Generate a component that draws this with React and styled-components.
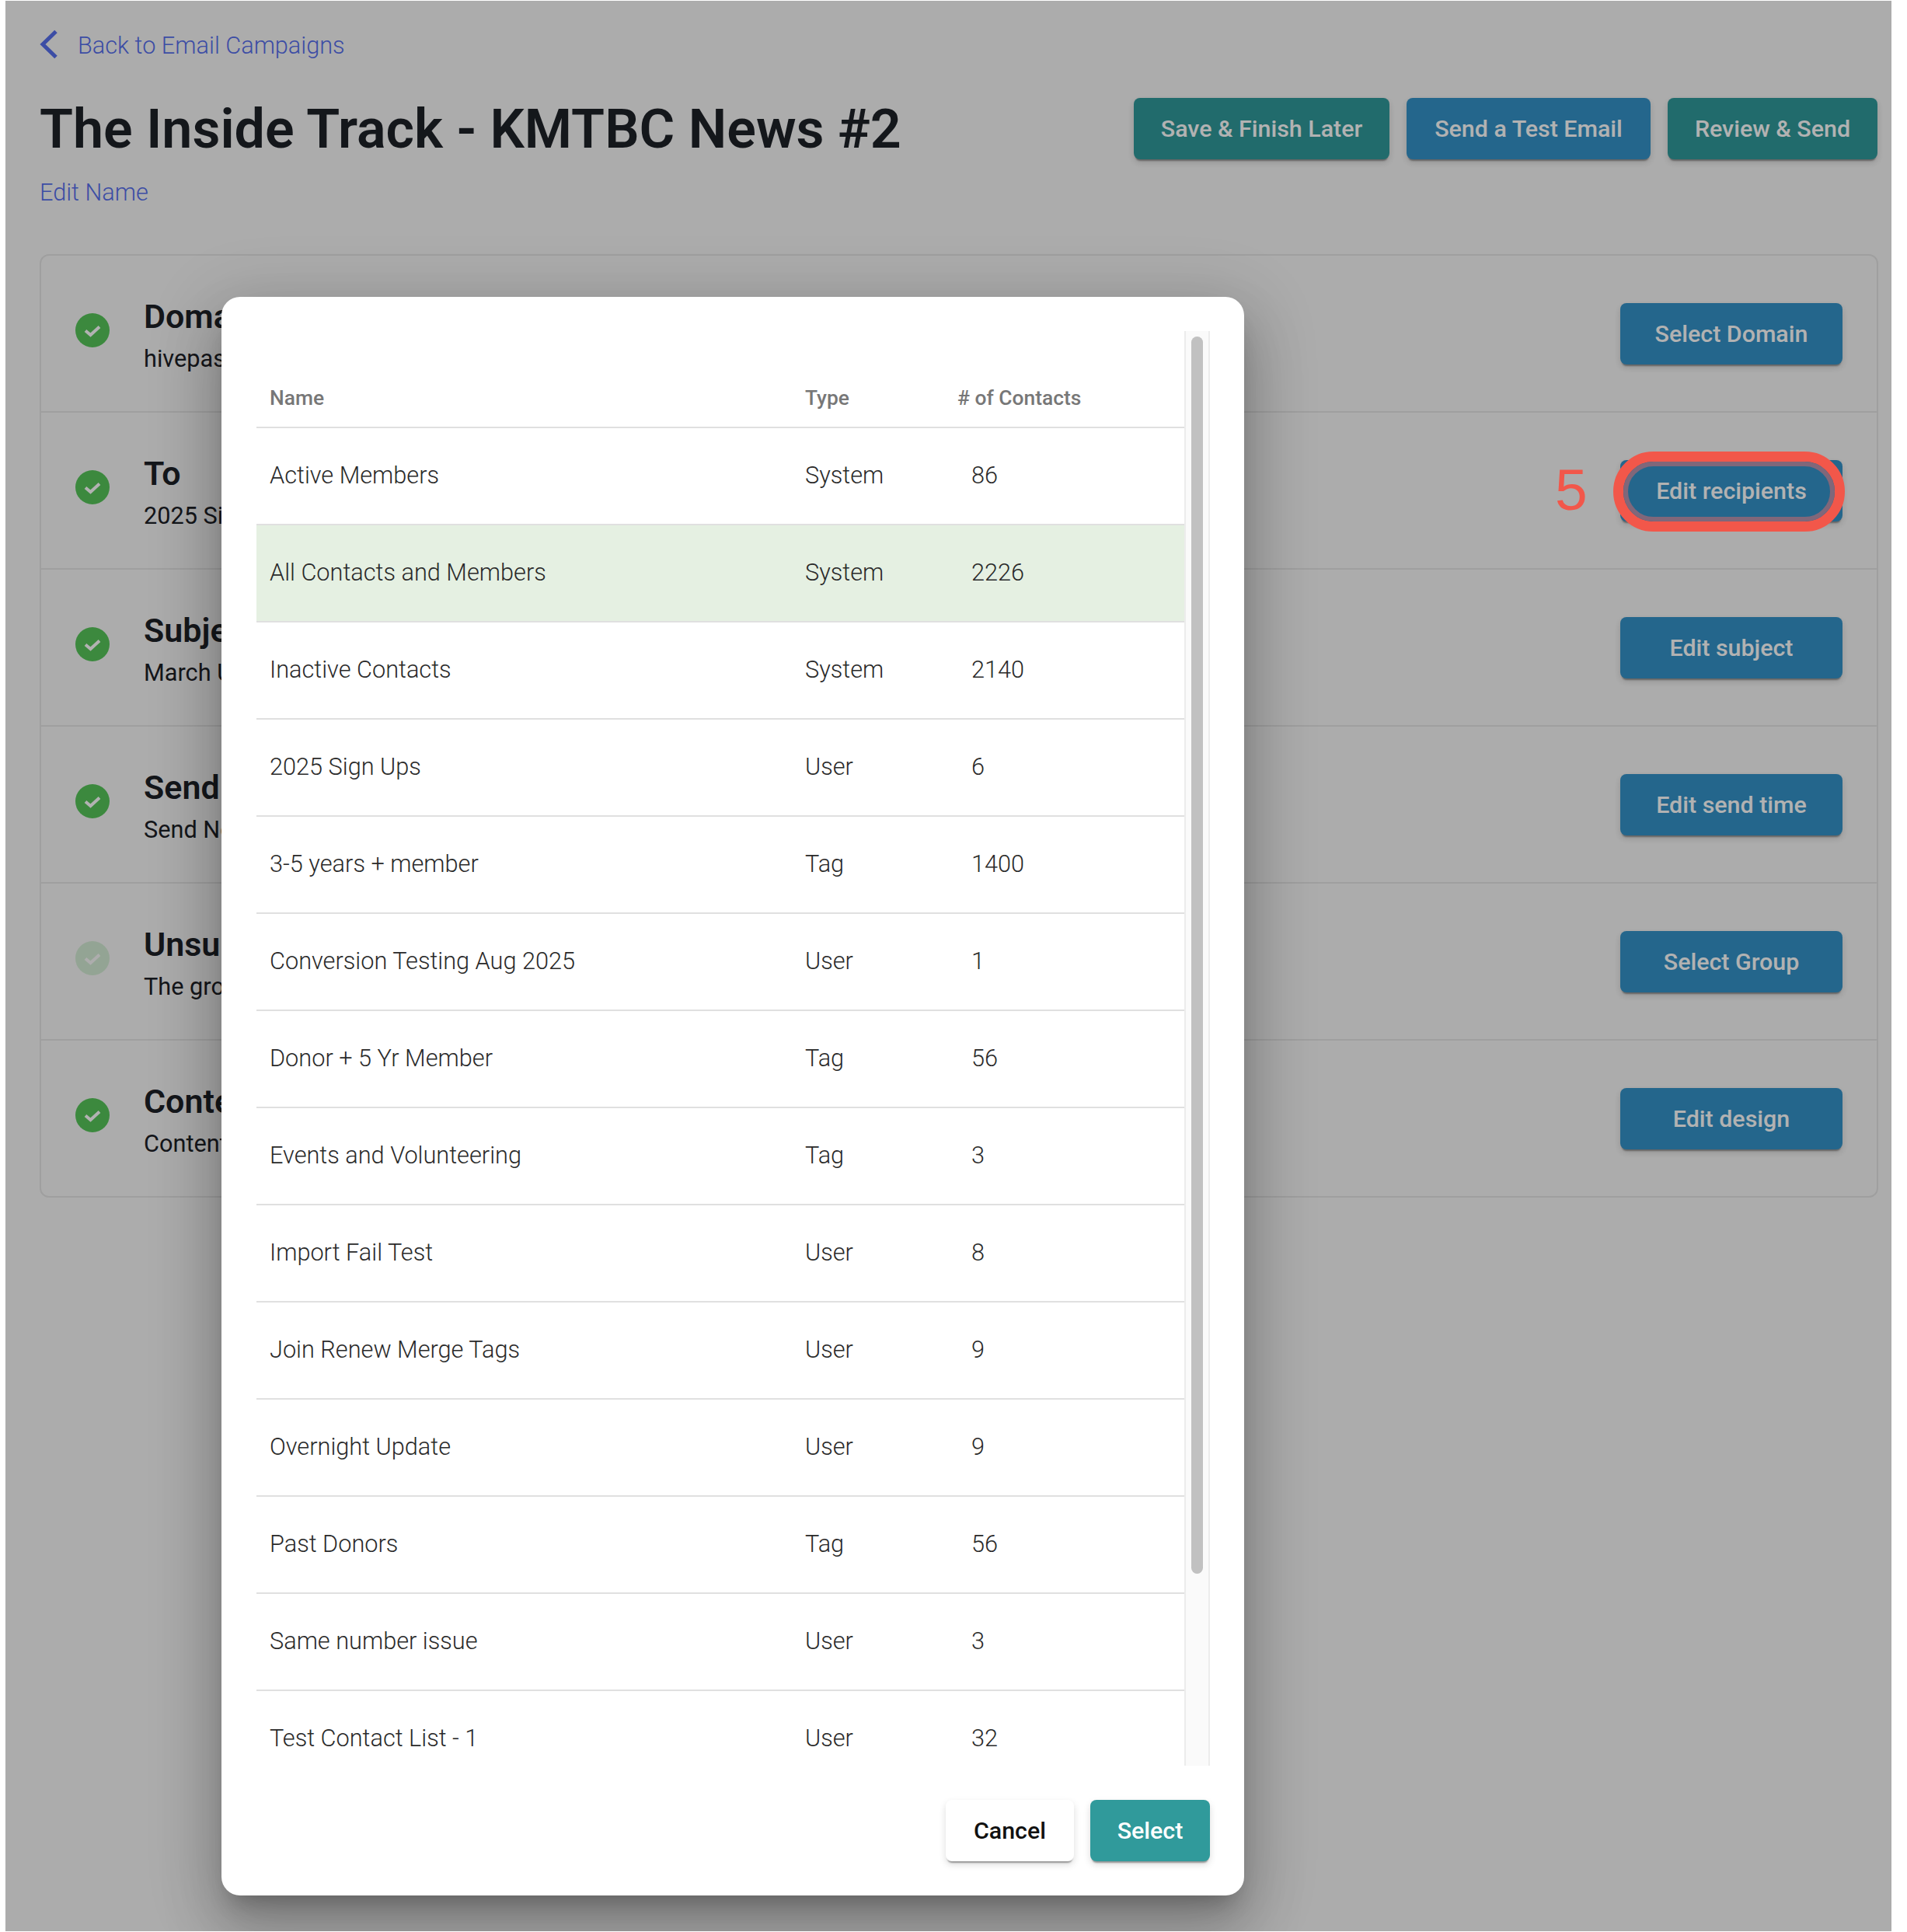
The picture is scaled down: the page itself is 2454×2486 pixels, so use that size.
import React from "react";
import styled, { createGlobalStyle } from "styled-components";

const GlobalStyle = createGlobalStyle`
  html, body {
    margin: 0;
    padding: 0;
    background: #fff;
  }
  * {
    box-sizing: border-box;
  }
`;

const Screen = styled.div`
  position: relative;
  width: 2427px;
  height: 2484px;
  margin: 1px 0 0 7px;
  padding: 37px 18px 0 44px;
  background: #f7f7f7;
  overflow: hidden;
  font-family: Roboto, sans-serif;
`;

const BackLink = styled.a`
  display: flex;
  align-items: center;
  gap: 25px;
  height: 37px;
  font-size: 30.7px;
  font-weight: 300;
  color: #576fec;
`;

const BackLabel = styled.span`
  margin-top: 3px;
`;

const HeaderRow = styled.div`
  display: flex;
  justify-content: space-between;
  align-items: center;
  margin-top: 51px;
`;

const Title = styled.h1`
  margin: 0;
  font-size: 70px;
  font-weight: 600;
  line-height: 78px;
  color: #1e2128;
`;

const Actions = styled.div`
  display: flex;
  gap: 22px;
`;

const Button = styled.button`
  display: flex;
  align-items: center;
  justify-content: center;
  height: 79px;
  width: ${(p) => (p.$width ? `${p.$width}px` : "auto")};
  padding: 0;
  border: 0;
  border-radius: 8px;
  background: ${(p) => (p.$kind === "teal" ? "#309a9b" : p.$kind === "blue" ? "#3493c9" : "#fff")};
  color: ${(p) => (p.$kind === "plain" ? "#111" : "#fff")};
  font-family: Roboto, sans-serif;
  font-size: 30.4px;
  font-weight: 500;
  box-shadow: 0 4px 2px -2px rgba(0, 0, 0, 0.35), 0 4px 10px rgba(0, 0, 0, 0.14);
`;

const EditName = styled.a`
  display: block;
  margin-top: 23px;
  font-size: 30.7px;
  font-weight: 300;
  line-height: 40px;
  color: #576fec;
`;

const Steps = styled.div`
  width: 2366px;
  margin-top: 59px;
  border: 2px solid #e4e4e4;
  border-radius: 12px;
`;

const Step = styled.div`
  display: flex;
  align-items: center;
  height: ${(p) => (p.$last ? 200 : 202)}px;
  padding: 0 44px;
  border-bottom: ${(p) => (p.$last ? "0" : "2px solid #e4e4e4")};
`;

const StepBadge = styled.svg`
  flex: none;
  width: 44px;
  height: 44px;
  margin: 0 44px 8px 0;
  opacity: ${(p) => (p.$faded ? 0.22 : 1)};
`;

const StepText = styled.div`
  margin-right: auto;
  padding-top: 7px;
  white-space: nowrap;
`;

const StepTitle = styled.div`
  font-size: 43px;
  font-weight: 600;
  line-height: 52px;
  color: #1e2128;
`;

const StepSub = styled.div`
  margin-top: 7px;
  font-size: 30.7px;
  line-height: 44px;
  color: #1e2128;
`;

const Overlay = styled.div`
  position: absolute;
  inset: 0;
  background: rgba(0, 0, 0, 0.3);
`;

const Modal = styled.div`
  position: absolute;
  left: 278px;
  top: 381px;
  display: flex;
  flex-direction: column;
  gap: 44px;
  width: 1316px;
  height: 2057px;
  padding: 44px 44px 44px 45px;
  background: #fff;
  border-radius: 24px;
  box-shadow: 0 21px 29px -13px rgba(0, 0, 0, 0.24), 0 46px 73px 6px rgba(0, 0, 0, 0.17),
    0 17px 88px 15px rgba(0, 0, 0, 0.14);
`;

const ListArea = styled.div`
  display: flex;
  height: 1846px;
`;

const List = styled.div`
  width: 1195px;
  overflow: hidden;
`;

const Row = styled.div`
  display: grid;
  grid-template-columns: 689px 196px 1fr;
  align-items: center;
  height: 125px;
  padding: 0 0 3px 17px;
  border-bottom: 2px solid #e0e0e0;
  background: ${(p) => (p.$selected ? "#e5f0e2" : "transparent")};
  font-size: 30.7px;
  font-weight: 300;
  color: #2a2a2a;
`;

const HeadRow = styled(Row)`
  align-items: end;
  padding-bottom: 22px;
  font-size: 26.4px;
  font-weight: 500;
  color: #777;
`;

const Count = styled.span`
  padding-left: 18px;
`;

const Track = styled.div`
  flex: none;
  width: 33px;
  padding: 7px 7px 0;
  background: #fafafa;
  border-left: 2px solid #ececec;
  border-right: 2px solid #ececec;
`;

const Thumb = styled.div`
  height: 1592px;
  border-radius: 9px;
  background: #c1c1c1;
`;

const ModalFooter = styled.div`
  display: flex;
  justify-content: flex-end;
  gap: 21px;
`;

const Marker = styled.div`
  position: absolute;
  left: 2069px;
  top: 580px;
  width: 298px;
  height: 103px;
  border: 13px solid #f2574a;
  border-radius: 52px;
`;

const MarkerInner = styled.div`
  height: 100%;
  border: 6px solid #80677a;
  border-radius: 40px;
`;

const MarkerNumber = styled.div`
  position: absolute;
  left: 1994px;
  top: 586px;
  font-family: "Liberation Sans", sans-serif;
  font-size: 75px;
  line-height: 86px;
  color: #f2574a;
`;

const steps = [
  { title: "Domain", sub: "hivepass", action: "Select Domain" },
  { title: "To", sub: "2025 Sign Ups", action: "Edit recipients" },
  { title: "Subject", sub: "March Update", action: "Edit subject" },
  { title: "Send", sub: "Send Now", action: "Edit send time" },
  { title: "Unsubscribe", sub: "The group", action: "Select Group", faded: true },
  { title: "Content", sub: "Content", action: "Edit design" },
];

const lists = [
  ["Active Members", "System", "86"],
  ["All Contacts and Members", "System", "2226"],
  ["Inactive Contacts", "System", "2140"],
  ["2025 Sign Ups", "User", "6"],
  ["3-5 years + member", "Tag", "1400"],
  ["Conversion Testing Aug 2025", "User", "1"],
  ["Donor + 5 Yr Member", "Tag", "56"],
  ["Events and Volunteering", "Tag", "3"],
  ["Import Fail Test", "User", "8"],
  ["Join Renew Merge Tags", "User", "9"],
  ["Overnight Update", "User", "9"],
  ["Past Donors", "Tag", "56"],
  ["Same number issue", "User", "3"],
  ["Test Contact List - 1", "User", "32"],
];

function CheckBadge({ faded }) {
  return (
    <StepBadge $faded={faded} viewBox="0 0 44 44">
      <circle cx="22" cy="22" r="22" fill="#56c55a" />
      <path d="M13 22.5l6.5 5.5L31 17.500" fill="none" stroke="#fff" strokeWidth="4" />
    </StepBadge>
  );
}

export default function App() {
  return (
    <Screen>
      <GlobalStyle />
      <BackLink>
        <svg width="24" height="38" viewBox="0 0 24 38">
          <path d="M21 2.500L4 19l17 16.500" fill="none" stroke="#576fec" strokeWidth="5" />
        </svg>
        <BackLabel>Back to Email Campaigns</BackLabel>
      </BackLink>
      <HeaderRow>
        <Title>The Inside Track - KMTBC News #2</Title>
        <Actions>
          <Button $kind="teal" $width={329}>Save &amp; Finish Later</Button>
          <Button $kind="blue" $width={314}>Send a Test Email</Button>
          <Button $kind="teal" $width={270}>Review &amp; Send</Button>
        </Actions>
      </HeaderRow>
      <EditName>Edit Name</EditName>
      <Steps>
        {steps.map((s, i) => (
          <Step key={s.title} $last={i === steps.length - 1}>
            <CheckBadge faded={s.faded} />
            <StepText>
              <StepTitle>{s.title}</StepTitle>
              <StepSub>{s.sub}</StepSub>
            </StepText>
            <Button $kind="blue" $width={286}>{s.action}</Button>
          </Step>
        ))}
      </Steps>
      <Overlay>
        <Modal>
          <ListArea>
            <List>
              <HeadRow>
                <span>Name</span>
                <span>Type</span>
                <span># of Contacts</span>
              </HeadRow>
              {lists.map(([name, type, count]) => (
                <Row key={name} $selected={name === "All Contacts and Members"}>
                  <span>{name}</span>
                  <span>{type}</span>
                  <Count>{count}</Count>
                </Row>
              ))}
            </List>
            <Track>
              <Thumb />
            </Track>
          </ListArea>
          <ModalFooter>
            <Button $kind="plain" $width={165}>Cancel</Button>
            <Button $kind="teal" $width={154}>Select</Button>
          </ModalFooter>
        </Modal>
        <MarkerNumber>5</MarkerNumber>
        <Marker>
          <MarkerInner />
        </Marker>
      </Overlay>
    </Screen>
  );
}
